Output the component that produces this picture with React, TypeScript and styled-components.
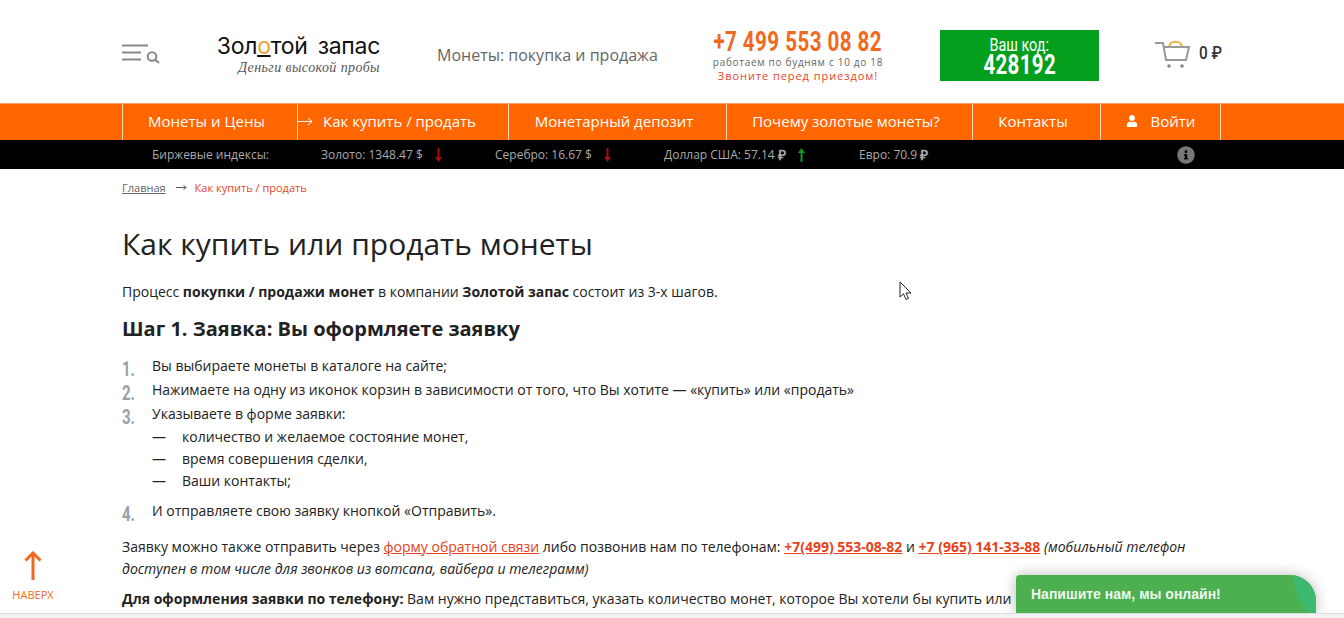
import styled, { createGlobalStyle } from "styled-components";
import { FaInfoCircle, FaUser } from "react-icons/fa";

const GlobalStyle = createGlobalStyle`
	html, body {
		margin: 0;
		padding: 0;
		height: 618px;
		overflow: hidden;
		background: #fff;
		font-family: "Open Sans", sans-serif;
		color: #222;
	}
`;

const PageBase = styled.div`
	position: relative;
	height: 618px;
	overflow: hidden;
`;

const Container = styled.div`
	width: 1100px;
	margin-left: 122px;
`;

// no condensed face is installed, so the DIN-like bits are squeezed Roboto
const Condensed = styled.span<{ $scale: number; $origin?: string }>`
	display: inline-block;
	font-family: "Roboto", sans-serif;
	white-space: nowrap;
	transform: scaleX(${(p) => p.$scale});
	transform-origin: ${(p) => p.$origin ?? "center"};
`;

const HeaderBase = styled(Container)`
	display: flex;
	height: 103px;
	& > * {
		flex: none;
	}
`;

const MenuIcon = styled.div`
	width: 95px;
	padding-top: 44px;
`;

const Logo = styled.div`
	width: 163px;
	padding-top: 31px;
	display: flex;
	flex-direction: column;
	align-items: flex-end;
`;

const LogoName = styled.div`
	font-family: "Inter", sans-serif;
	font-size: 23px;
	line-height: 30px;
	color: #111;
	word-spacing: 4px;
	white-space: nowrap;
	letter-spacing: -0.3px;
	& b {
		font-weight: 400;
		color: #e8a33a;
		text-decoration: underline;
		text-decoration-color: #111;
		text-underline-offset: 1px;
	}
`;

const LogoTag = styled.div`
	font-family: "Liberation Serif", serif;
	font-style: italic;
	font-size: 14px;
	line-height: 14px;
	color: #555;
	letter-spacing: 0.4px;
	white-space: nowrap;
`;

const Slogan = styled.div`
	width: 219px;
	padding: 45px 0 0 57px;
	font-size: 16px;
	line-height: 20px;
	color: #666;
	white-space: nowrap;
`;

const PhoneBlock = styled.div`
	width: 284px;
	display: flex;
	flex-direction: column;
	align-items: center;
	padding-top: 27px;
	box-sizing: border-box;
`;

const PhoneNumber = styled(Condensed)`
	font-weight: 700;
	font-size: 28px;
	line-height: 29px;
	letter-spacing: 0.6px;
	color: #f0691e;
`;

const PhoneHours = styled.div`
	font-size: 10px;
	line-height: 12px;
	letter-spacing: 0.7px;
	color: #666;
	white-space: nowrap;
`;

const PhoneCall = styled.div`
	font-size: 11px;
	line-height: 15px;
	letter-spacing: 0.95px;
	color: #e8452c;
	white-space: nowrap;
`;

const CodeBox = styled.div`
	width: 159px;
	height: 51px;
	margin-top: 30px;
	background: #049f1c;
	color: #fff;
	display: flex;
	flex-direction: column;
	align-items: center;
`;

const CodeLabel = styled(Condensed)`
	font-size: 18px;
	line-height: 17px;
	margin-top: 6px;
`;

const CodeValue = styled(Condensed)`
	font-size: 28px;
	font-weight: 700;
	line-height: 24px;
	letter-spacing: 0.5px;
`;

const Cart = styled.div`
	display: flex;
	margin-left: 56px;
	padding-top: 39px;
	gap: 9px;
`;

const CartSum = styled(Condensed)`
	font-weight: 500;
	font-size: 18px;
	line-height: 28px;
	color: #333;
`;

const NavBase = styled.div`
	height: 37px;
	background: #ff6600;
	border-top: 1px solid #ffa566;
	box-sizing: border-box;
`;

const NavRow = styled(Container)`
	display: flex;
	height: 36px;
	border-left: 1px solid #ffd9bd;
	width: 1099px;
`;

const NavItem = styled.div<{ $width: number }>`
	position: relative;
	width: ${(p) => p.$width}px;
	flex: none;
	box-sizing: border-box;
	border-right: 1px solid #ffd9bd;
	display: flex;
	align-items: center;
	justify-content: center;
	gap: 13px;
	padding: 0 7px 2px 0;
	color: #fff;
	font-size: 15px;
	white-space: nowrap;
`;

const LoginItem = styled(NavItem)`
	padding-right: 0;
`;

const NavArrow = styled.svg`
	position: absolute;
	left: -1px;
	top: 13px;
`;

const Ticker = styled.div`
	height: 29px;
	background: #000;
`;

const TickerRow = styled.div`
	position: relative;
	display: flex;
	height: 29px;
	align-items: center;
	color: #aaa;
	font-size: 12px;
	padding-left: 152px;
	white-space: nowrap;
`;

const TickerLabel = styled.span<{ $width: number }>`
	display: inline-flex;
	align-items: center;
	width: ${(p) => p.$width}px;
	flex: none;
`;

const Ruble = styled.b`
	font-size: 14px;
	margin-left: 3px;
`;

const TickerInfo = styled.span`
	position: absolute;
	left: 1177px;
	top: 6px;
	color: #777;
	font-size: 18px;
	line-height: 18px;
	display: flex;
`;

const TrendArrow = styled.svg`
	margin-left: 12px;
`;

const Crumbs = styled(Container)`
	display: flex;
	align-items: center;
	height: 37px;
	font-size: 11px;
`;

const CrumbLink = styled.span`
	color: #666;
	text-decoration: underline;
`;

const CrumbCurrent = styled.span`
	color: #e8452c;
`;

const CrumbArrow = styled.svg`
	margin: 0 8px 0 10px;
`;

const Content = styled(Container)`
	font-size: 14px;
	line-height: 22px;
	color: #222;
`;

const Title = styled.h1`
	margin: 17px 0 0;
	font-size: 30px;
	line-height: 42px;
	font-weight: 400;
	color: #222;
`;

const Para = styled.p<{ $top: number }>`
	margin: ${(p) => p.$top}px 0 0;
	& a {
		color: #e8411c;
		text-decoration: underline;
	}
`;

const StepTitle = styled.h2`
	margin: 12px 0 0;
	font-size: 20px;
	line-height: 28px;
	font-weight: 700;
	color: #222;
`;

const Steps = styled.div`
	margin-top: 12px;
`;

const Step = styled.div<{ $gap?: number }>`
	display: flex;
	margin-top: ${(p) => p.$gap ?? 2}px;
	height: 22px;
`;

const StepSlot = styled.span`
	width: 30px;
	flex: none;
	height: 22px;
	padding-top: 3px;
	box-sizing: border-box;
`;

const StepNum = styled(Condensed)`
	font-weight: 700;
	font-size: 20px;
	line-height: 22px;
	color: #9aa0a6;
`;

const SubList = styled.div`
	margin-top: 1px;
`;

const SubItem = styled.div`
	display: flex;
	margin-left: 30px;
	& span {
		width: 30px;
		flex: none;
	}
`;

const BackToTop = styled.div`
	position: absolute;
	left: 12px;
	top: 551px;
	width: 42px;
	display: flex;
	flex-direction: column;
	align-items: center;
	color: #f0691e;
	font-size: 11px;
	line-height: 14px;
	gap: 7px;
`;

const ChatBase = styled.div`
	position: absolute;
	left: 1016px;
	top: 575px;
	width: 300px;
	height: 38px;
	background: #4caf50;
	border-radius: 4px 26px 0 0;
	box-shadow: 0 0 14px rgba(0, 0, 0, 0.28);
	overflow: hidden;
	color: #eef8ee;
	font-family: "Liberation Sans", sans-serif;
	font-weight: 700;
	font-size: 14px;
	line-height: 38px;
	padding-left: 15px;
	box-sizing: border-box;
	&::after {
		content: "";
		position: absolute;
		left: 277px;
		top: -52px;
		width: 104px;
		height: 104px;
		background: #3cb96e;
		border-radius: 50%;
	}
`;

const ScrollBar = styled.div`
	position: absolute;
	left: 0;
	right: 0;
	top: 613px;
	height: 5px;
	background: #f1f1f1;
	border-top: 1px solid #dcdcdc;
	box-sizing: border-box;
`;

const Pointer = styled.svg`
	position: absolute;
	left: 899px;
	top: 281px;
`;

function Trend({ up }: { up?: boolean }) {
	const color = up ? "#0a9a1e" : "#a80e0e";
	return (
		<TrendArrow width="7" height="14" viewBox="0 0 7 14">
			{up ? (
				<path d="M3.5 0 L7 5 H4.5 V14 H2.5 V5 H0 Z" fill={color} />
			) : (
				<path d="M3.5 14 L7 9 H4.5 V0 H2.5 V9 H0 Z" fill={color} />
			)}
		</TrendArrow>
	);
}

function NumberedStep({ n, gap, children }: { n: number; gap?: number; children: string }) {
	return (
		<Step $gap={gap}>
			<StepSlot>
				<StepNum $scale={0.75} $origin="left">
					{n}.
				</StepNum>
			</StepSlot>
			<span>{children}</span>
		</Step>
	);
}

export default function App() {
	return (
		<PageBase>
			<GlobalStyle />
			<HeaderBase>
				<MenuIcon>
					<svg width="38" height="20" viewBox="0 0 38 20">
						<g stroke="#888" strokeWidth="2" fill="none">
							<path d="M0 1.5 H26" />
							<path d="M0 8.5 H19" />
							<path d="M0 15.5 H19" />
							<circle cx="30" cy="12.5" r="4.3" />
							<path d="M33 15.5 L37 19" />
						</g>
					</svg>
				</MenuIcon>
				<Logo>
					<LogoName>
						Зол<b>о</b>той запас
					</LogoName>
					<LogoTag>Деньги высокой пробы</LogoTag>
				</Logo>
				<Slogan>Монеты: покупка и продажа</Slogan>
				<PhoneBlock>
					<PhoneNumber $scale={0.735}>+7 499 553 08 82</PhoneNumber>
					<PhoneHours>работаем по будням с 10 до 18</PhoneHours>
					<PhoneCall>Звоните перед приездом!</PhoneCall>
				</PhoneBlock>
				<CodeBox>
					<CodeLabel $scale={0.8}>Ваш код:</CodeLabel>
					<CodeValue $scale={0.73}>428192</CodeValue>
				</CodeBox>
				<Cart>
					<svg width="35" height="30" viewBox="0 0 35 30">
						<path d="M14 8 C15 1 26 1 27 8" stroke="#eeb04a" strokeWidth="2" fill="none" />
						<path d="M0 4 H8 L11 21 H31 L34 8 H9" stroke="#999" strokeWidth="2" fill="none" />
						<circle cx="14" cy="27" r="1.8" fill="#888" />
						<circle cx="27" cy="27" r="1.8" fill="#888" />
					</svg>
					<CartSum $scale={0.85} $origin="left">
						0 ₽
					</CartSum>
				</Cart>
			</HeaderBase>
			<NavBase>
				<NavRow>
					<NavItem $width={175}>Монеты и Цены</NavItem>
					<NavItem $width={211}>
						<NavArrow width="16" height="9" viewBox="0 0 16 9">
							<path d="M0 4.5 H15 M11 1 L15 4.5 L11 8" stroke="#fff" strokeWidth="1" fill="none" />
						</NavArrow>
						<span>Как купить / продать</span>
					</NavItem>
					<NavItem $width={218}>Монетарный депозит</NavItem>
					<NavItem $width={246}>Почему золотые монеты?</NavItem>
					<NavItem $width={128}>Контакты</NavItem>
					<LoginItem $width={120}>
						<FaUser size={12} />
						<span>Войти</span>
					</LoginItem>
				</NavRow>
			</NavBase>
			<Ticker>
				<TickerRow>
					<TickerLabel $width={169}>Биржевые индексы:</TickerLabel>
					<TickerLabel $width={174}>
						Золото: 1348.47 $
						<Trend />
					</TickerLabel>
					<TickerLabel $width={169}>
						Серебро: 16.67 $
						<Trend />
					</TickerLabel>
					<TickerLabel $width={195}>
						Доллар США: 57.14
						<Ruble>₽</Ruble>
						<Trend up />
					</TickerLabel>
					<TickerLabel $width={120}>
						Евро: 70.9
						<Ruble>₽</Ruble>
					</TickerLabel>
					<TickerInfo>
						<FaInfoCircle />
					</TickerInfo>
				</TickerRow>
			</Ticker>
			<Crumbs>
				<CrumbLink>Главная</CrumbLink>
				<CrumbArrow width="11" height="7" viewBox="0 0 11 7">
					<path d="M0 3.5 H10 M7.5 1 L10 3.5 L7.5 6" stroke="#555" strokeWidth="1" fill="none" />
				</CrumbArrow>
				<CrumbCurrent>Как купить / продать</CrumbCurrent>
			</Crumbs>
			<Content>
				<Title>Как купить или продать монеты</Title>
				<Para $top={16}>
					Процесс <b>покупки / продажи монет</b> в компании <b>Золотой запас</b> состоит из 3-х шагов.
				</Para>
				<StepTitle>Шаг 1. Заявка: Вы оформляете заявку</StepTitle>
				<Steps>
					<NumberedStep n={1}>Вы выбираете монеты в каталоге на сайте;</NumberedStep>
					<NumberedStep n={2}>
						Нажимаете на одну из иконок корзин в зависимости от того, что Вы хотите — «купить» или «продать»
					</NumberedStep>
					<NumberedStep n={3}>Указываете в форме заявки:</NumberedStep>
					<SubList>
						<SubItem>
							<span>—</span>количество и желаемое состояние монет,
						</SubItem>
						<SubItem>
							<span>—</span>время совершения сделки,
						</SubItem>
						<SubItem>
							<span>—</span>Ваши контакты;
						</SubItem>
					</SubList>
					<NumberedStep n={4} gap={8}>
						И отправляете свою заявку кнопкой «Отправить».
					</NumberedStep>
				</Steps>
				<Para $top={14}>
					Заявку можно также отправить через <a>форму обратной связи</a> либо позвонив нам по телефонам:{" "}
					<a>
						<b>+7(499) 553-08-82</b>
					</a>{" "}
					и{" "}
					<a>
						<b>+7 (965) 141-33-88</b>
					</a>{" "}
					<i>(мобильный телефон</i> <i>доступен в том числе для звонков из вотсапа, вайбера и телеграмм)</i>
				</Para>
				<Para $top={8}>
					<b>Для оформления заявки по телефону:</b> Вам нужно представиться, указать количество монет, которое Вы хотели бы купить или
				</Para>
			</Content>
			<BackToTop>
				<svg width="18" height="30" viewBox="0 0 18 30">
					<path d="M9 29 V2 M1.5 9.5 L9 2 L16.5 9.5" stroke="#f0691e" strokeWidth="3" fill="none" />
				</svg>
				<span>НАВЕРХ</span>
			</BackToTop>
			<ChatBase>Напишите нам, мы онлайн!</ChatBase>
			<ScrollBar />
			<Pointer width="14" height="21" viewBox="0 0 14 21">
				<path
					d="M1 1 V16 L4.5 12.8 L7 18.5 L9.5 17.4 L7 12 H12 Z"
					fill="#fff"
					stroke="#222"
					strokeWidth="1"
				/>
			</Pointer>
		</PageBase>
	);
}
